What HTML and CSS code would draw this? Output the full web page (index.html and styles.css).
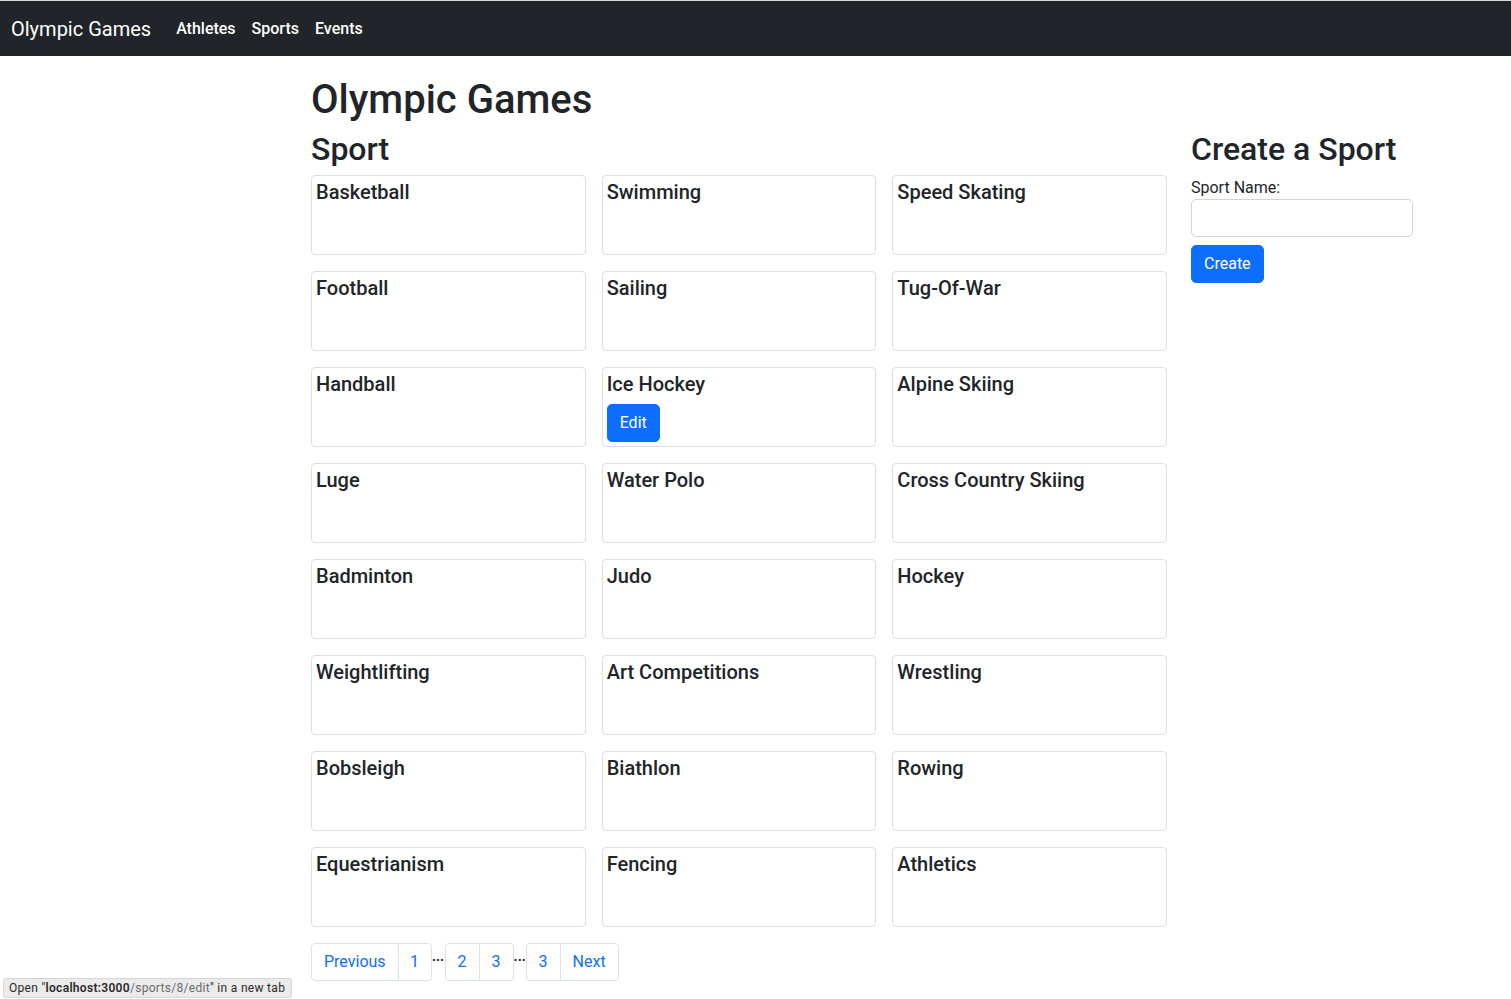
FILE: index.html
```html
<!DOCTYPE html>
<html lang="en">
<head>
<meta charset="utf-8">
<title>Olympic Games</title>
<link rel="stylesheet" href="styles.css">
</head>
<body>
<nav class="navbar">
  <a class="brand" href="#">Olympic Games</a>
  <a class="nav-link" href="#">Athletes</a>
  <a class="nav-link" href="#">Sports</a>
  <a class="nav-link" href="#">Events</a>
</nav>
<main class="page">
  <h1 class="title">Olympic Games</h1>
  <div class="layout">
    <section class="sports">
      <h2 class="section-title">Sport</h2>
      <div class="grid">
        <div class="card"><h5 class="card-title">Basketball</h5></div>
        <div class="card"><h5 class="card-title">Swimming</h5></div>
        <div class="card"><h5 class="card-title">Speed Skating</h5></div>
        <div class="card"><h5 class="card-title">Football</h5></div>
        <div class="card"><h5 class="card-title">Sailing</h5></div>
        <div class="card"><h5 class="card-title">Tug-Of-War</h5></div>
        <div class="card"><h5 class="card-title">Handball</h5></div>
        <div class="card"><h5 class="card-title">Ice Hockey</h5><a class="btn" href="#">Edit</a></div>
        <div class="card"><h5 class="card-title">Alpine Skiing</h5></div>
        <div class="card"><h5 class="card-title">Luge</h5></div>
        <div class="card"><h5 class="card-title">Water Polo</h5></div>
        <div class="card"><h5 class="card-title">Cross Country Skiing</h5></div>
        <div class="card"><h5 class="card-title">Badminton</h5></div>
        <div class="card"><h5 class="card-title">Judo</h5></div>
        <div class="card"><h5 class="card-title">Hockey</h5></div>
        <div class="card"><h5 class="card-title">Weightlifting</h5></div>
        <div class="card"><h5 class="card-title">Art Competitions</h5></div>
        <div class="card"><h5 class="card-title">Wrestling</h5></div>
        <div class="card"><h5 class="card-title">Bobsleigh</h5></div>
        <div class="card"><h5 class="card-title">Biathlon</h5></div>
        <div class="card"><h5 class="card-title">Rowing</h5></div>
        <div class="card"><h5 class="card-title">Equestrianism</h5></div>
        <div class="card"><h5 class="card-title">Fencing</h5></div>
        <div class="card"><h5 class="card-title">Athletics</h5></div>
      </div>
      <div class="pagination">
        <div class="page-group">
          <a class="page-link" href="#">Previous</a>
          <a class="page-link one" href="#">1</a>
        </div>
        <span class="break break-first">...</span>
        <div class="page-group">
          <a class="page-link" href="#">2</a>
          <a class="page-link" href="#">3</a>
        </div>
        <span class="break">...</span>
        <div class="page-group">
          <a class="page-link" href="#">3</a>
          <a class="page-link" href="#">Next</a>
        </div>
      </div>
    </section>
    <aside class="create">
      <h2 class="section-title">Create a Sport</h2>
      <form class="form">
        <label class="label" for="name">Sport Name:</label>
        <input class="input" id="name" type="text">
        <button class="btn btn-submit" type="button">Create</button>
      </form>
    </aside>
  </div>
</main>
<div class="status">Open "<b>localhost:3000</b><span class="muted">/sports/8/edit</span>" in a new tab</div>
</body>
</html>
```

FILE: styles.css
```css
* { box-sizing: border-box; }
html, body { margin: 0; padding: 0; }
body {
  font-family: Roboto, "Liberation Sans", sans-serif;
  font-size: 16px;
  line-height: 1.5;
  color: #212529;
  background: #fff;
}
a { text-decoration: none; }

.navbar {
  display: flex;
  align-items: center;
  height: 56px;
  background: #212529;
  border-top: 1px solid #d8d8d8;
  padding: 1px 11px 0;
}
.brand {
  color: #fff;
  font-size: 20px;
  margin-right: 17px;
}
.nav-link {
  color: #fff;
  font-size: 16px;
  padding: 0 8px;
  font-weight: 500;
}

.page {
  padding: 20px 0 40px 311px;
  width: 1413px;
}
.title {
  font-size: 40px;
  font-weight: 500;
  line-height: 1.2;
  margin: 0 0 6px;
}
.layout {
  display: flex;
  gap: 24px;
  align-items: flex-start;
}
.sports { width: 856px; }
.create { width: 222px; }
.section-title {
  font-size: 32px;
  font-weight: 500;
  line-height: 1.2;
  margin: 0 0 7px;
}
.grid {
  display: grid;
  grid-template-columns: repeat(3, 1fr);
  gap: 16px;
}
.card {
  height: 80px;
  border: 1px solid #dfdfdf;
  border-radius: 4px;
  padding: 4px 4px;
}
.card-title {
  font-size: 20px;
  font-weight: 500;
  line-height: 1.2;
  margin: 0 0 8px;
}
.btn {
  display: inline-block;
  background: #0d6efd;
  color: #fff;
  border: 1px solid #0d6efd;
  border-radius: 5px;
  font-family: inherit;
  font-size: 16px;
  line-height: 24px;
  padding: 6px 12px;
}
.form { display: flex; flex-direction: column; align-items: flex-start; }
.label { display: block; line-height: 24px; padding-top: 1px; margin-bottom: -1px; }
.input {
  width: 222px;
  height: 38px;
  border: 1px solid #ced4da;
  border-radius: 5px;
  margin: 0;
}
.btn-submit { margin-top: 8px; }

.pagination {
  display: flex;
  align-items: flex-start;
  margin-top: 16px;
}
.page-group { display: flex; }
.page-link {
  display: block;
  color: #0d6efd;
  border: 1px solid #dee2e6;
  padding: 6px 12px;
  line-height: 24px;
}
.page-link.one { padding: 6px 11.5px; }
.page-link + .page-link { margin-left: -1px; }
.page-link:first-child { border-radius: 4px 0 0 4px; }
.page-link:last-child { border-radius: 0 4px 4px 0; }
.break {
  width: 12px;
  font-size: 14px;
  line-height: 14px;
  padding-top: 6px;
  text-align: center;
  color: #212529;
  font-weight: 700;
}
.break-first { width: 13px; }

.status {
  position: fixed;
  left: 3px;
  bottom: 1px;
  height: 20px;
  padding: 0 6px 0 5px;
  background: #ebebeb;
  border: 1px solid #d6d6d6;
  border-radius: 3px;
  font-size: 12px;
  line-height: 18px;
  letter-spacing: 0.3px;
  color: #2a2a2a;
}
.status b { font-weight: 600; }
.status .muted { color: #6b6b6b; }
```
